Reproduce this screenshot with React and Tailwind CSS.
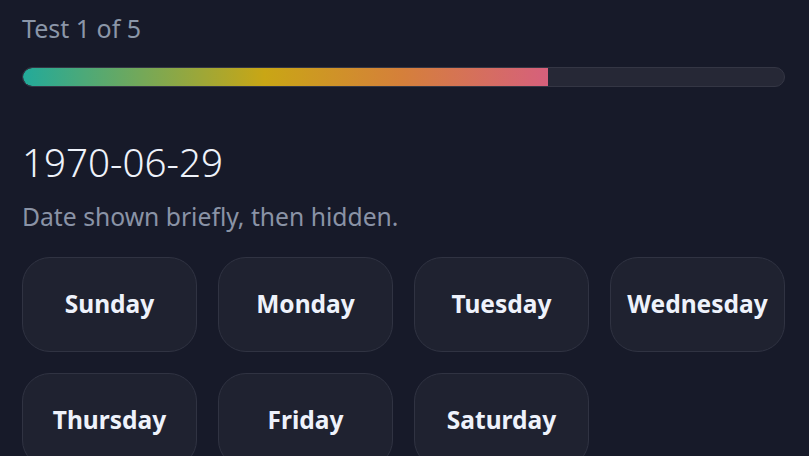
import React from 'react';

const days = ['Sunday', 'Monday', 'Tuesday', 'Wednesday', 'Thursday', 'Friday', 'Saturday'];

const App = () => {
  return (
    <div className="min-h-screen bg-[#171a29] pl-[22px] pr-[24px] pt-3 font-['Noto_Sans',sans-serif]">
      {/* HEADER */}
      <div className="text-[25px] leading-[32px] text-[#8b96a8]">Test 1 of 5</div>

      {/* PROGRESS */}
      <div className="mt-[23px] h-[20px] rounded-full border border-[#343644] bg-[#262836] overflow-hidden">
        <div
          className="h-full rounded-l-full bg-[linear-gradient(90deg,#22aa9a_0%,#c9a615_46%,#d5803a_72%,#d6607c_100%)]"
          style={{ width: '69%' }}
        />
      </div>

      {/* DATE */}
      <div className="mt-[52px] text-[38.6px] leading-[46px] font-light text-[#eef2fa]">1970-06-29</div>
      <div className="mt-4 text-[24.7px] leading-[32px] text-[#8a93a6]">Date shown briefly, then hidden.</div>

      {/* CHOICES */}
      <div className="mt-[24px] grid grid-cols-4 gap-[21px]">
        {days.map((d) => (
          <button
            key={d}
            className="h-[95px] rounded-[28px] border border-[#303342] bg-[#1f2230] text-[24.5px] font-bold text-[#eef2fb]"
          >
            {d}
          </button>
        ))}
      </div>
    </div>
  );
};

export default App;
